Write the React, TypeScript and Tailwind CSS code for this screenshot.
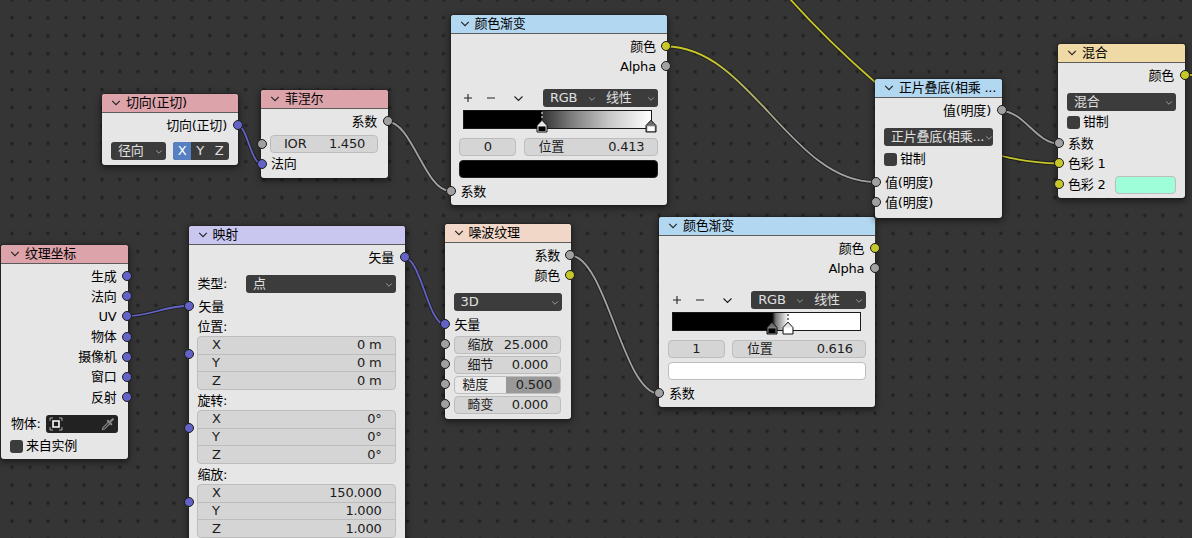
import type { ReactNode } from "react";

type SocketKind = "value" | "color" | "vector";

const socketFill: Record<SocketKind, string> = {
  value: "bg-[#a1a1a1]",
  color: "bg-[#c7c729]",
  vector: "bg-[#6363c7]",
};

function Chevron({ className = "" }: { className?: string }) {
  return (
    <svg viewBox="0 0 10 6" className={`h-[6px] w-[10px] shrink-0 ${className}`} fill="none">
      <path d="M1.2 0.9 5 4.7 8.8 0.9" stroke="currentColor" strokeWidth="1.1" />
    </svg>
  );
}

function Socket({ kind, side }: { kind: SocketKind; side: "in" | "out" }) {
  return (
    <span
      className={`absolute top-1/2 size-[10px] -translate-y-1/2 rounded-full border border-[#1c1c1c] ${
        side === "in" ? "-left-[4.5px]" : "-right-[4.5px]"
      } ${socketFill[kind]}`}
    />
  );
}

function Node({
  title,
  place,
  header,
  children,
}: {
  title: string;
  place: string;
  header: string;
  children: ReactNode;
}) {
  return (
    <section
      className={`absolute flex flex-col rounded-[3px] bg-[#e6e6e6] shadow-[0_0_0_1px_rgba(30,30,30,0.35),0_2px_6px_1px_rgba(0,0,0,0.5)] ${place}`}
    >
      <header
        className={`flex h-[19px] shrink-0 items-center rounded-t-[3px] border-b border-[#5c5c5c] pl-[9px] ${header}`}
      >
        <Chevron className="mr-[5px] text-[#222]" />
        <h2>{title}</h2>
      </header>
      {children}
    </section>
  );
}

function Output({ label, kind, className = "" }: { label: string; kind: SocketKind; className?: string }) {
  return (
    <div className={`relative flex h-[20px] shrink-0 items-center justify-end pt-px pr-[11px] ${className}`}>
      {label}
      <Socket kind={kind} side="out" />
    </div>
  );
}

function Input({
  label,
  kind,
  className = "",
  children,
}: {
  label?: string;
  kind: SocketKind;
  className?: string;
  children?: ReactNode;
}) {
  return (
    <div className={`relative flex h-[20px] shrink-0 items-center pt-px pr-[9px] pl-[10px] ${className}`}>
      <Socket kind={kind} side="in" />
      {label}
      {children}
    </div>
  );
}

function Select({ label, className = "" }: { label: string; className?: string }) {
  return (
    <div
      className={`flex h-[18px] shrink-0 items-center justify-between rounded-[3px] bg-[#3c3c3c] pr-[2px] pl-[7px] text-[#e0e0e0] ${className}`}
    >
      <span>{label}</span>
      <Chevron className="mt-px scale-75 text-[#b4b4b4]" />
    </div>
  );
}

function Field({ label, value, className = "" }: { label: string; value: string; className?: string }) {
  return (
    <div
      className={`flex h-[18px] items-center justify-between rounded-[4px] border border-[#bdbdbd] bg-[#d5d5d5] text-[#1c1c1c] ${className}`}
    >
      <span>{label}</span>
      <span>{value}</span>
    </div>
  );
}

function Check({ label, className = "" }: { label: string; className?: string }) {
  return (
    <div className={`flex h-[18px] shrink-0 items-center pl-[9px] ${className}`}>
      <span className="mr-[3px] size-[13px] rounded-[3px] bg-[#3c3c3c]" />
      {label}
    </div>
  );
}

function VectorField({ label, values }: { label: string; values: string[] }) {
  return (
    <>
      <div className="flex h-[20px] shrink-0 items-center pt-[2px] pl-[9px]">{label}</div>
      <div className="relative h-[54px] shrink-0 pr-[9.5px] pl-[8.5px]">
        <div className="h-[54px] rounded-[4px] border border-[#bdbdbd] bg-[#d5d5d5] text-[#1c1c1c]">
          {values.map((value, i) => (
            <div
              key={i}
              className="flex h-[17.5px] items-center justify-between border-[#bdbdbd] pr-[13px] pl-[14px] not-last:border-b"
            >
              <span>{"XYZ"[i]}</span>
              <span>{value}</span>
            </div>
          ))}
        </div>
        <span className="absolute top-[12.5px] -left-[4.5px] size-[10px] rounded-full border border-[#1c1c1c] bg-[#6363c7]" />
      </div>
    </>
  );
}

function Stop({ at, color, active }: { at: number; color: string; active?: boolean }) {
  return (
    <svg
      viewBox="0 0 12 22"
      className="absolute top-0 h-[22px] w-[12px] -translate-x-1/2"
      style={{ left: `${at * 100}%` }}
    >
      {active && (
        <path d="M6 1V10" stroke={color === "#fff" ? "#000" : "#fff"} strokeWidth="1" strokeDasharray="2 2" />
      )}
      <path d="M1 14.5 6 9.2 11 14.5V21H1Z" fill={active ? "#e6e6e6" : "#6e6e6e"} />
      <path d="M2 15H10V20.5H2Z" fill={color} stroke={active ? "#fff" : "#999"} strokeWidth="0.8" />
      <path d="M1 14.5 6 9.2 11 14.5V21H1Z" stroke="#111" strokeWidth="1" fill="none" />
    </svg>
  );
}

function ColorRamp({
  place,
  ramp,
  index,
  position,
  swatch,
  children,
}: {
  place: string;
  ramp: string;
  index: string;
  position: string;
  swatch: string;
  children: ReactNode;
}) {
  return (
    <Node title="颜色渐变" place={place} header="bg-[#b2d7f0]">
      <Output label="颜色" kind="color" className="mt-[2px]" />
      <Output label="Alpha" kind="value" />
      <div className="mt-[13px] flex h-[18px] items-center pr-[9px] pl-[12.7px]">
        <svg viewBox="0 0 62 10" className="h-[10px] w-[62px]" fill="none" stroke="#222" strokeWidth="1.1">
          <path d="M1 5H9M5 1V9M24 5H32M51.5 3.5 55.5 7.5 59.5 3.5" />
        </svg>
        <div className="ml-auto flex">
          <Select label="RGB" className="w-[56px] rounded-r-none" />
          <Select label="线性" className="w-[59px] rounded-l-none" />
        </div>
      </div>
      <div className={`relative mt-[3px] ml-[12.8px] h-[19px] w-[189px] border border-[#1a1a1a] ${ramp}`}>{children}</div>
      <div className="mt-[9px] flex h-[18px] justify-between pr-[9px] pl-[8.9px]">
        <div className="flex w-[57px] items-center justify-center rounded-[4px] border border-[#bdbdbd] bg-[#d5d5d5] text-[#1c1c1c]">
          {index}
        </div>
        <Field label="位置" value={position} className="w-[134.4px] pr-[12.5px] pl-[14px]" />
      </div>
      <div className={`mx-[8.9px] mt-[4px] h-[18px] rounded-[4px] border ${swatch}`} />
      <Input label="系数" kind="value" className="mt-[3px]" />
    </Node>
  );
}

const links = [
  { d: "M237 125C247 125 251 163.500 261 163.500", stroke: "#6363c7" },
  { d: "M387 121.500C412 121.500 425 191 450 191", stroke: "#a1a1a1" },
  { d: "M666 46.500C750 46.500 791 182 875 182", stroke: "url(#colorToValue)" },
  { d: "M1001 111C1024 111 1036 143.500 1059 143.500", stroke: "#a1a1a1" },
  { d: "M790 -1C816 28 845 56 876 83C910 113 960 147 1002 156C1020 160.500 1035 163 1059 163.500", stroke: "#c7c729" },
  { d: "M127 316C151 316 164 306 188 306", stroke: "#6363c7" },
  { d: "M404 257.500C421 257.500 428 324.500 445 324.500", stroke: "#6363c7" },
  { d: "M570 255.500C606 255.500 623 393.500 659 393.500", stroke: "#a1a1a1" },
  { d: "M1185 75H1193", stroke: "#c7c729" },
];

export default function App() {
  return (
    <main className="relative h-[538px] w-[1192px] overflow-hidden bg-[#353535] font-['DejaVu_Sans','Noto_Sans_CJK_SC',sans-serif] text-[13px] leading-[18px] tracking-[-0.22px] whitespace-nowrap text-black">
      <svg viewBox="0 0 1192 538" className="absolute inset-0 h-[538px] w-[1192px]" fill="none">
        <defs>
          <pattern id="grid" x="3.010" y="-9.290" width="17.980" height="17.980" patternUnits="userSpaceOnUse">
            <rect x="7.490" y="7.490" width="3" height="3" fill="#202020" />
          </pattern>
          <linearGradient id="colorToValue" x1="666" y1="0" x2="875" y2="0" gradientUnits="userSpaceOnUse">
            <stop offset="0.200" stopColor="#c7c729" />
            <stop offset="0.600" stopColor="#a1a1a1" />
          </linearGradient>
        </defs>
        <rect width="1192" height="538" fill="url(#grid)" />
        {links.map((link) => (
          <g key={link.d}>
            <path d={link.d} stroke="#1f1f1f" strokeWidth="3.600" />
            <path d={link.d} stroke={link.stroke} strokeWidth="1.800" />
          </g>
        ))}
      </svg>

      <Node title="切向(正切)" place="left-[102px] top-[94px] h-[71px] w-[136px]" header="bg-[#dca3aa]">
        <Output label="切向(正切)" kind="vector" className="mt-[2px]" />
        <div className="mt-[7px] flex justify-between pr-[9px] pl-[9px]">
          <Select label="径向" className="w-[55px]" />
          <div className="flex h-[18px] w-[56px] overflow-hidden rounded-[3px] bg-[#3c3c3c] text-center text-[#e0e0e0]">
            <span className="w-[18px] bg-[#5680c2] text-white">X</span>
            <span className="w-[18px]">Y</span>
            <span className="w-[20px]">Z</span>
          </div>
        </div>
      </Node>

      <Node title="菲涅尔" place="left-[261px] top-[90px] h-[88px] w-[127px]" header="bg-[#dca3aa]">
        <Output label="系数" kind="value" className="mt-[2px]" />
        <Input kind="value" className="mt-[2.5px]">
          <Field label="IOR" value="1.450" className="-ml-px w-[108px] pr-[12px] pl-[13px]" />
        </Input>
        <Input label="法向" kind="vector" />
      </Node>

      <ColorRamp
        place="left-[450.5px] top-[15.2px] h-[190px] w-[216.4px]"
        ramp="bg-[linear-gradient(to_right,#000_41.3%,#333_42%,#7f7f7f_58%,#c8c8c8_78%,#fff_100%)]"
        index="0"
        position="0.413"
        swatch="border-[#222] bg-black"
      >
        <Stop at={0.413} color="#000" active />
        <Stop at={1} color="#fff" />
      </ColorRamp>

      {/* link from the lower ramp up to the second math input, hidden except along the node edge */}
      <span className="absolute top-[202px] left-[875px] h-[46px] w-px bg-[#66663a]" />

      <ColorRamp
        place="left-[658.9px] top-[217.4px] h-[190px] w-[216.4px]"
        ramp="bg-[linear-gradient(to_right,#000_53%,#777_55%,#fff_61.6%)]"
        index="1"
        position="0.616"
        swatch="border-[#bdbdbd] bg-white"
      >
        <Stop at={0.53} color="#000" />
        <Stop at={0.616} color="#fff" active />
      </ColorRamp>

      <Node title="正片叠底(相乘 ..." place="left-[875px] top-[79px] h-[139px] w-[127px]" header="bg-[#b2d7f0]">
        <Output label="值(明度)" kind="value" className="mt-[2px]" />
        <Select label="正片叠底(相乘..." className="mx-[9px] mt-[8px]" />
        <Check label="钳制" className="mt-[4px]" />
        <Input label="值(明度)" kind="value" className="mt-[4px]" />
        <Input label="值(明度)" kind="value" />
      </Node>

      <Node title="混合" place="left-[1058px] top-[44px] h-[154px] w-[127px]" header="bg-[#efd9a5]">
        <Output label="颜色" kind="color" className="mt-[2px]" />
        <Select label="混合" className="mx-[9px] mt-[8px]" />
        <Check label="钳制" className="mt-[2px]" />
        <Input label="系数" kind="value" className="mt-[2px]" />
        <Input label="色彩 1" kind="color" />
        <Input label="色彩 2" kind="color" className="mt-px justify-between">
          <span className="h-[18px] w-[61px] rounded-[4px] border border-[#bdbdbd] bg-[#9dfed9]" />
        </Input>
      </Node>

      <Node title="纹理坐标" place="left-px top-[245px] h-[214px] w-[126.5px]" header="bg-[#dca3aa]">
        <div className="mt-[2px] grid auto-rows-[20.2px]">
          {["生成", "法向", "UV", "物体", "摄像机", "窗口", "反射"].map((name) => (
            <Output key={name} label={name} kind="vector" />
          ))}
        </div>
        <div className="mt-[8px] flex h-[18px] items-center justify-between pr-[9.4px] pl-[10px]">
          物体:
          <div className="flex h-[18px] w-[72px] items-center justify-between rounded-[3px] bg-[#222] px-[3px]">
            <svg viewBox="0 0 14 14" className="size-[14px]" fill="none">
              <path d="M1 4V1H4M10 1H13V4M13 10V13H10M4 13H1V10" stroke="#aaa" />
              <path d="M4 4H10V10H4Z" stroke="#fff" strokeWidth="1.600" />
            </svg>
            <svg viewBox="0 0 14 14" className="size-[14px]" fill="none" stroke="#858585">
              <path d="M1.500 12.500 2 10.500 8 4.500 9.500 6 3.500 12Z" strokeWidth="1.100" />
              <path d="M6.800 3.800 10.200 7.200M9 5 11.800 2.200" strokeWidth="2.200" strokeLinecap="round" />
            </svg>
          </div>
        </div>
        <Check label="来自实例" className="mt-[4px]" />
      </Node>

      <Node title="映射" place="left-[188.5px] top-[226px] h-[320px] w-[216.5px]" header="bg-[#c9c7f0]">
        <Output label="矢量" kind="vector" className="mt-[2px]" />
        <div className="mt-[8px] flex h-[18px] shrink-0 items-center justify-between pr-[9px] pl-[9px]">
          类型:
          <Select label="点" className="w-[150px]" />
        </div>
        <Input label="矢量" kind="vector" className="mt-[3px]" />
        <VectorField label="位置:" values={["0 m", "0 m", "0 m"]} />
        <VectorField label="旋转:" values={["0°", "0°", "0°"]} />
        <VectorField label="缩放:" values={["150.000", "1.000", "1.000"]} />
      </Node>

      <Node title="噪波纹理" place="left-[444.6px] top-[224px] h-[195px] w-[126.400px]" header="bg-[#f0d7c7]">
        <Output label="系数" kind="value" className="mt-[2px]" />
        <Output label="颜色" kind="color" />
        <Select label="3D" className="mx-[9px] mt-[8px]" />
        <Input label="矢量" kind="vector" className="mt-[3.4px]" />
        <Input kind="value">
          <Field label="缩放" value="25.000" className="-ml-px w-full pr-[12px] pl-[13px]" />
        </Input>
        <Input kind="value">
          <Field label="细节" value="0.000" className="-ml-px w-full pr-[12px] pl-[13px]" />
        </Input>
        <Input kind="value">
          <Field
            label="糙度"
            value="0.500"
            className="-ml-px w-full bg-[linear-gradient(to_right,#e9e9e9_49%,#999_49%)] pr-[8px] pl-[8px]"
          />
        </Input>
        <Input kind="value">
          <Field label="畸变" value="0.000" className="-ml-px w-full pr-[12px] pl-[13px]" />
        </Input>
      </Node>
    </main>
  );
}
